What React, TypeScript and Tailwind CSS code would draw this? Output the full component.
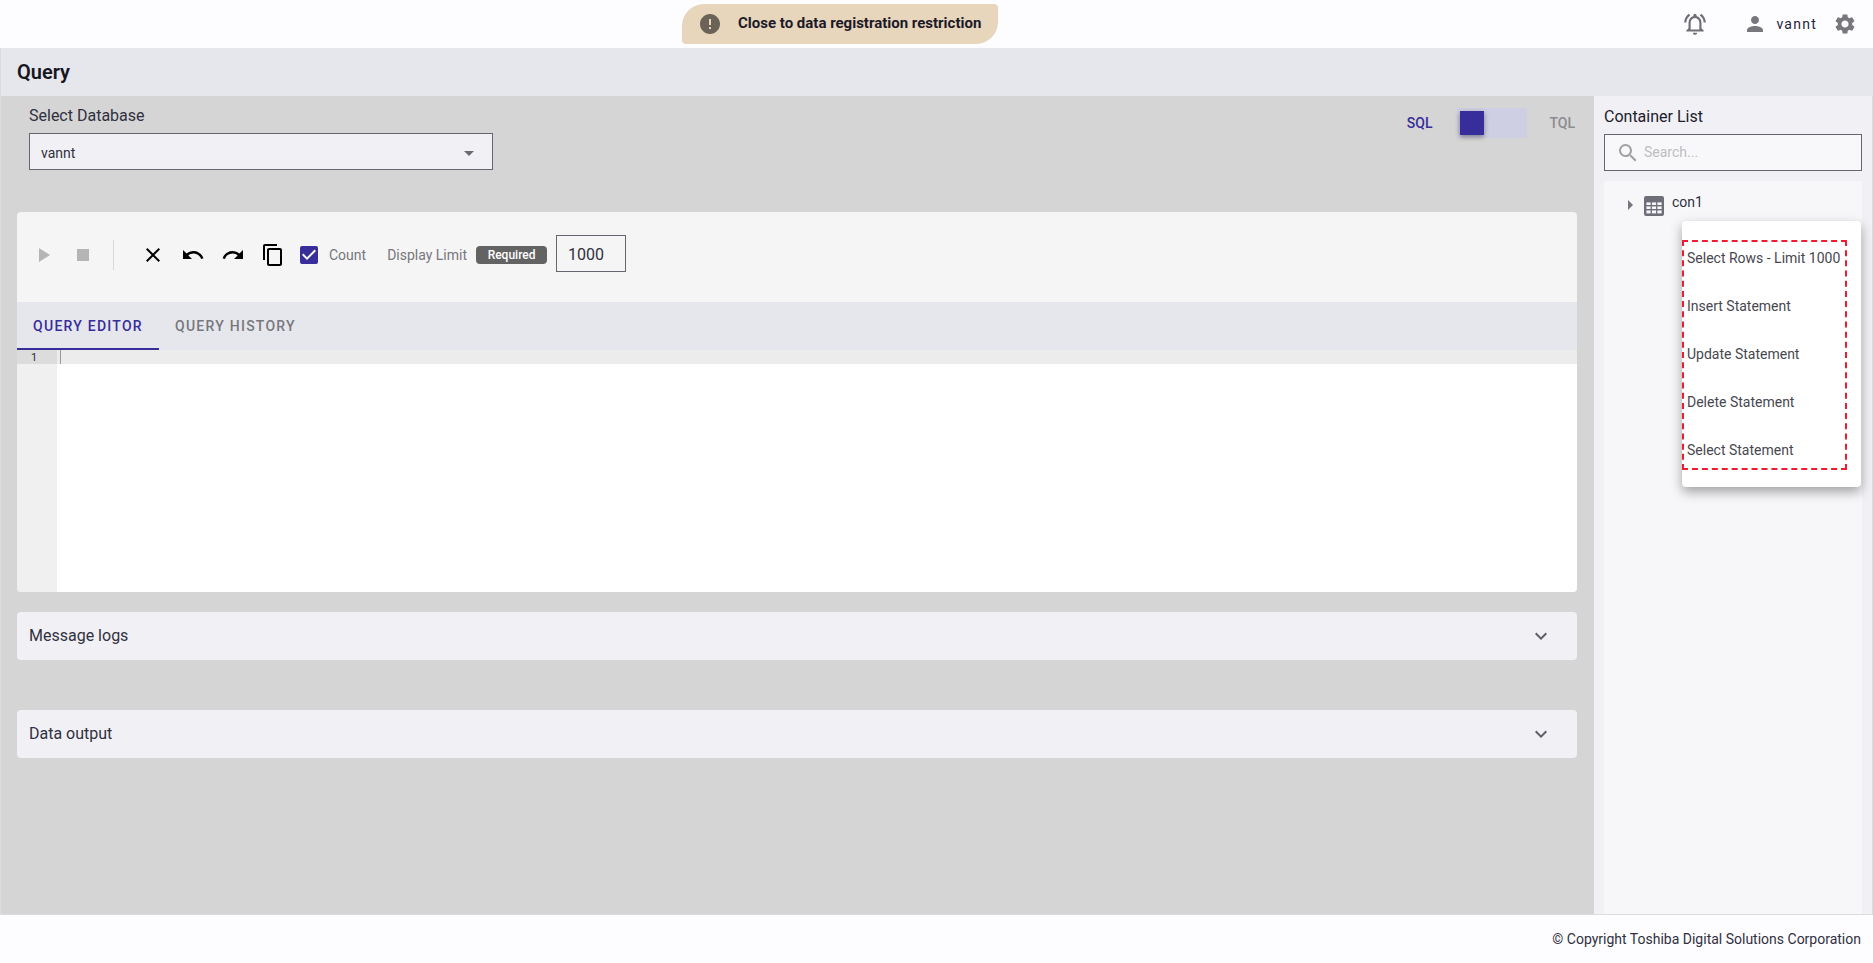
import {
  MdArrowDropDown,
  MdCheckBox,
  MdClose,
  MdContentCopy,
  MdError,
  MdExpandMore,
  MdOutlineNotificationsActive,
  MdPerson,
  MdPlayArrow,
  MdRedo,
  MdSearch,
  MdSettings,
  MdStop,
  MdUndo,
} from "react-icons/md";

const menuItems = [
  "Select Rows - Limit 1000",
  "Insert Statement",
  "Update Statement",
  "Delete Statement",
  "Select Statement",
];

const TableIcon = () => (
  <svg width="20" height="20" viewBox="0 0 20 20" className="block">
    <rect x="0" y="0" width="20" height="20" rx="2" fill="#6e6e78" />
    <g fill="#f7f7fa">
      <rect x="2.4" y="6.4" width="4.2" height="2.6" />
      <rect x="7.9" y="6.4" width="4.2" height="2.6" />
      <rect x="13.4" y="6.4" width="4.2" height="2.6" />
      <rect x="2.4" y="10.4" width="4.2" height="2.6" />
      <rect x="7.9" y="10.4" width="4.2" height="2.6" />
      <rect x="13.4" y="10.4" width="4.2" height="2.6" />
      <rect x="2.4" y="14.4" width="4.2" height="3" />
      <rect x="7.9" y="14.4" width="4.2" height="3" />
      <rect x="13.4" y="14.4" width="4.2" height="3" />
    </g>
  </svg>
);

const Accordion = ({ title }: { title: string }) => (
  <div className="h-12 flex items-center justify-between bg-[#f0f0f5] rounded-[4px] pl-[12px] pr-[24px] text-[16px] text-[#303040]">
    <span>{title}</span>
    <MdExpandMore size={24} color="#5f5f68" />
  </div>
);

const App = () => {
  return (
    <div className="w-full h-[963px] flex flex-col overflow-hidden bg-[#fdfdff] font-['Roboto',sans-serif]">
      {/* Top bar */}
      <div className="h-12 shrink-0 flex items-center pl-[682px] pr-[16px]">
        <div className="w-[316px] h-10 flex items-center pl-[16px] bg-[#e7d5bc] rounded-[4px] rounded-tl-[22px] rounded-br-[22px]">
          <MdError size={24} color="#6b6357" />
          <span className="ml-[16px] -mt-[1px] text-[15px] font-bold text-[#1c1a28]">Close to data registration restriction</span>
        </div>

        <div className="ml-auto flex items-center">
          <MdOutlineNotificationsActive size={26} color="#6f6f76" />
          <MdPerson size={24} color="#77777d" className="ml-[35px]" />
          <span className="ml-[9px] text-[14px] tracking-[1.25px] text-[#23233a]">vannt</span>
          <MdSettings size={24} color="#77777d" className="ml-[16px]" />
        </div>
      </div>

      {/* Page title */}
      <div className="h-12 shrink-0 flex items-center pl-[16px] bg-[#e6e7ec] border-l border-[#dcdcdc]">
        <h1 className="text-[20px] font-semibold text-[#16161f]">Query</h1>
      </div>

      <div className="flex-1 flex min-h-0 border-l border-[#dcdcdc]">
        {/* Main column */}
        <div className="w-[1593px] shrink-0 bg-[#d5d5d5] pl-[16px] pr-[17px] flex flex-col">
          <div className="h-[116px] shrink-0 flex justify-between pl-[12px] pr-[2px]">
            <div className="pt-[10px]">
              <div className="h-[20px] leading-[20px] text-[16px] text-[#303040]">Select Database</div>
              <div className="mt-[7px] w-[464px] h-[37px] flex items-center justify-between pl-[11px] pr-[11px] pt-[3px] bg-[#f0f0f5] border border-[#666670]">
                <span className="text-[14px] text-[#303040]">vannt</span>
                <MdArrowDropDown size={24} color="#6a6a72" />
              </div>
            </div>

            <div className="pt-[12px] h-[42px] flex items-center">
              <span className="text-[14px] font-medium text-[#372d9b]">SQL</span>
              <div className="ml-[25px] w-[70px] h-[30px] p-[3px] bg-[#cfcfe4]">
                <div className="w-[24px] h-[24px] bg-[#372d9b] shadow-[0_2px_5px_rgba(0,0,0,0.4)]" />
              </div>
              <span className="ml-[22px] text-[14px] font-medium text-[#8c8c90]">TQL</span>
            </div>
          </div>

          {/* Editor card */}
          <div className="rounded-[4px] overflow-hidden">
            <div className="h-[90px] flex items-center pl-[14px] pb-[4px] bg-[#f5f5f5]">
              <MdPlayArrow size={24} color="#b5b5b5" />
              <MdStop size={24} color="#b5b5b5" className="ml-[16px]" />
              <div className="ml-[18px] w-px h-[30px] bg-[#d8d8d8]" />
              <MdClose size={24} color="#000" className="ml-[27px]" />
              <MdUndo size={24} color="#000" className="ml-[16px]" />
              <MdRedo size={24} color="#000" className="ml-[16px]" />
              <MdContentCopy size={24} color="#000" className="ml-[16px]" />
              <MdCheckBox size={24} color="#372d9b" className="ml-[12px]" />
              <span className="ml-[8px] text-[14px] text-[#77777d]">Count</span>
              <span className="ml-[21px] text-[14px] text-[#77777d]">Display Limit</span>
              <span className="ml-[9px] w-[71px] h-[18px] flex items-center justify-center rounded-[4px] bg-[#636363] text-[12px] font-medium text-white">Required</span>
              <div className="ml-[9px] mb-[3px] w-[70px] h-[37px] flex items-center pl-[11px] pt-[2px] border border-[#666670] text-[16px] text-[#303040]">1000</div>
            </div>

            <div className="h-12 flex bg-[#e6e7ec] text-[14px] font-medium tracking-[1.25px]">
              <div className="w-[142px] pt-[2px] flex items-center justify-center text-[#372d9b] border-b-2 border-[#372d9b]">QUERY EDITOR</div>
              <div className="ml-[16px] flex items-center text-[#77777d]">QUERY HISTORY</div>
            </div>

            <div className="h-[242px] flex bg-white">
              <div className="w-[40px] shrink-0 bg-[#f0f0f0]">
                <div className="h-[14px] pt-[1px] leading-[14px] bg-[#dcdcdc] pl-[14px] text-[11px] text-[#303040]">1</div>
              </div>
              <div className="flex-1">
                <div className="h-[14px] bg-[#ececec] pl-[3px]">
                  <div className="w-px h-[14px] bg-[#9a9a9a]" />
                </div>
              </div>
            </div>
          </div>

          <div className="mt-[20px]">
            <Accordion title="Message logs" />
          </div>
          <div className="mt-[50px]">
            <Accordion title="Data output" />
          </div>
        </div>

        {/* Container list */}
        <div className="flex-1 flex flex-col bg-[#f0f0f5] pl-[10px] pr-[10px] border-r border-[#dcdcdc]">
          <div className="h-[38px] shrink-0 pt-[11px] leading-[20px] text-[16px] text-[#20202c]">Container List</div>
          <div className="h-[37px] shrink-0 flex items-center pl-[11px] bg-[#f8f8fb] border border-[#666670]">
            <MdSearch size={24} color="#a0a0a4" />
            <span className="ml-[4px] text-[14px] text-[#bdbdc0]">Search...</span>
          </div>

          <div className="relative flex-1 mt-[10px] bg-[#f7f7fa]">
            <div className="pl-[24px] pt-[15px] flex items-start">
              <div className="mt-[4px] w-0 h-0 border-y-[5px] border-y-transparent border-l-[5px] border-l-[#77777d] mr-[11px]" />
              <TableIcon />
              <span className="ml-[8px] -mt-[4px] text-[14px] text-[#303040]">con1</span>
            </div>

            {/* Context menu */}
            <div className="absolute left-[78px] top-[40px] w-[179px] h-[266px] bg-white rounded-[4px] shadow-[0_5px_12px_rgba(0,0,0,0.35)] pt-[19px]">
              <div className="w-[165px] h-[230px] border-2 border-dashed border-[#ee1c2e]">
                <div className="-mt-[8px] pl-[3px]">
                  {menuItems.map((item) => (
                    <div key={item} className="h-12 flex items-center text-[14px] whitespace-nowrap text-[#47474f]">{item}</div>
                  ))}
                </div>
              </div>
            </div>
          </div>
        </div>
      </div>

      {/* Footer */}
      <div className="h-[49px] shrink-0 flex items-center justify-end pr-[12px] text-[14px] text-[#303040] border-t border-[#dcdcdc]">
        © Copyright Toshiba Digital Solutions Corporation
      </div>
    </div>
  );
};

export default App;
